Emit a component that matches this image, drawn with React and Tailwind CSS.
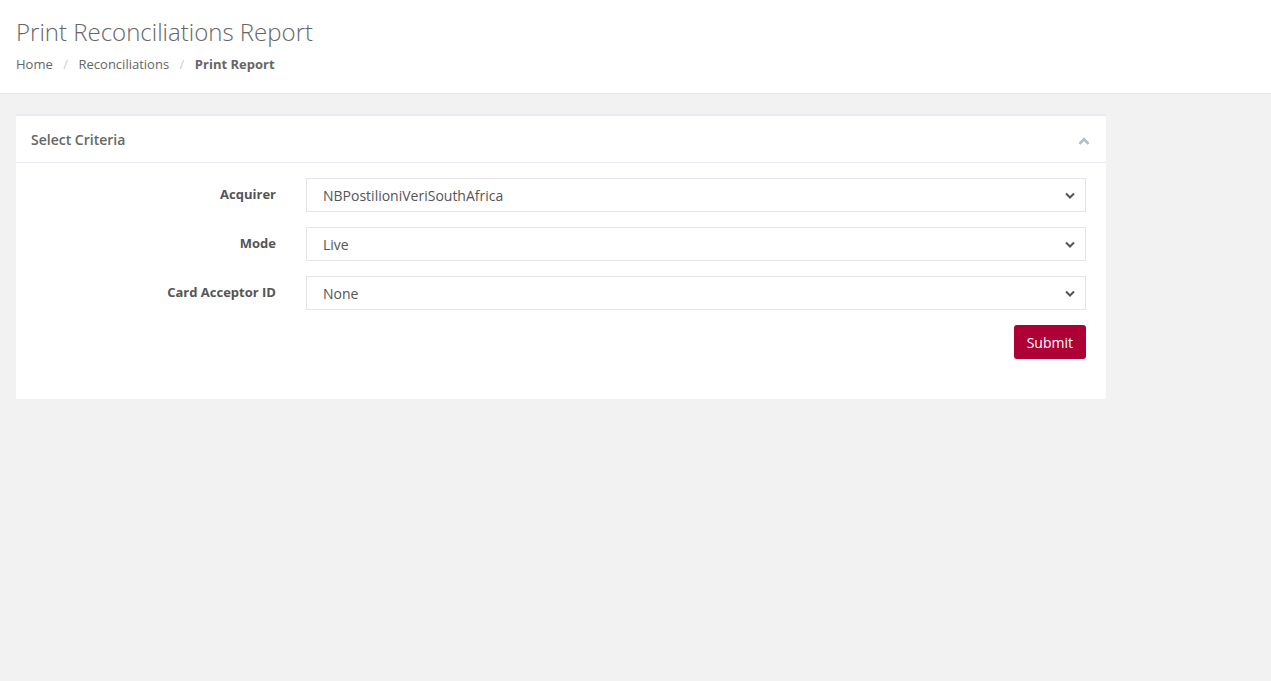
import React from "react";

function Chevron({ up = false, className = "", w = 10, h = 7, sw = 2 }) {
  return (
    <svg width={w} height={h} viewBox="0 0 10 7" className={className}>
      <path
        d={up ? "M1 6 L5 2 L9 6" : "M1 1.5 L5 5.5 L9 1.5"}
        fill="none"
        stroke="currentColor"
        strokeWidth={sw}
      />
    </svg>
  );
}

function SelectRow({ label, value }) {
  return (
    <div className="flex items-center">
      <label className="w-[240px] text-right text-[13px] font-bold text-[#555]">{label}</label>
      <div className="ml-[30px] flex-1 h-[34px] border border-[#e5e5e5] bg-white flex items-center justify-between pl-4 pr-[10px]">
        <span className="text-[14px] text-[#555]">{value}</span>
        <Chevron className="text-[#555]" />
      </div>
    </div>
  );
}

export default function App() {
  return (
    <div className="min-h-screen bg-[#f2f2f2] font-['Open_Sans',sans-serif]">
      <div className="h-[94px] bg-white border-b border-[#e5e5e5] px-4 pt-[15px]">
        <h1 className="text-[24px] font-light text-[#666] leading-[34px]">Print Reconciliations Report</h1>
        <div className="mt-[6px] flex items-center text-[13px] text-[#666]">
          <span>Home</span>
          <span className="mx-[10.5px] text-[#ccc]">/</span>
          <span>Reconciliations</span>
          <span className="mx-[10.5px] text-[#ccc]">/</span>
          <span className="font-bold">Print Report</span>
        </div>
      </div>

      <div className="ml-4 mt-[20px] w-[1090px] bg-white border-t-2 border-[#e7ecf1]">
        <div className="h-[47px] border-b border-[#e7ecf1] flex items-center justify-between pl-[15px] pr-[16px]">
          <span className="text-[14px] font-semibold text-[#666]">Select Criteria</span>
          <Chevron up w={12} h={8} sw={2.4} className="text-[#b4bec8] mt-[3px]" />
        </div>
        <div className="px-5 pt-[15px] pb-[40px] flex flex-col gap-[15px]">
          <SelectRow label="Acquirer" value="NBPostilioniVeriSouthAfrica" />
          <SelectRow label="Mode" value="Live" />
          <SelectRow label="Card Acceptor ID" value="None" />
          <div className="flex justify-end">
            <button className="h-[34px] px-[13px] rounded-[3px] bg-[#ae0037] text-white text-[14px]">Submit</button>
          </div>
        </div>
      </div>
    </div>
  );
}
